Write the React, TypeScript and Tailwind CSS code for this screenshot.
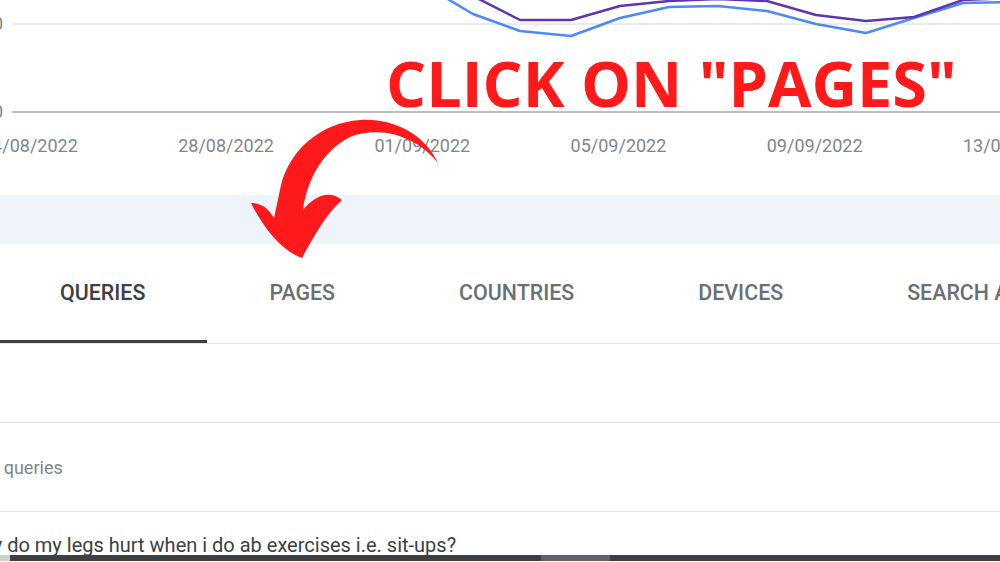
import React from 'react'

const dates = ['24/08/2022', '28/08/2022', '01/09/2022', '05/09/2022', '09/09/2022', '13/09/2022']
const tabs = ['Queries', 'Pages', 'Countries', 'Devices', 'Search appearance']

const blue: [number, number][] = [
  [424, -15], [473, 14], [520, 31], [571, 36], [620, 18], [669, 7], [718, 6],
  [767, 11], [816, 24], [866, 33], [914, 18], [963, 3], [1012, 2],
]
const purple: [number, number][] = [
  [424, -30], [473, -4], [520, 20], [571, 20], [620, 6], [669, 1], [718, -1],
  [767, 1], [816, 15], [866, 21], [914, 17], [963, 0], [1012, -2],
]

const toPoints = (pts: [number, number][]) => pts.map(([x, y]) => `${x},${y}`).join(' ')

function Chart() {
  return (
    <div className="relative h-[124px]">
      <svg className="absolute inset-0" width="1000" height="124" viewBox="0 0 1000 124">
        <line x1="12" y1="24" x2="1000" y2="24" stroke="#e4e4e4" strokeWidth="1.5" />
        <line x1="12" y1="112" x2="1000" y2="112" stroke="#a8a8a8" strokeWidth="1.5" />
        <polyline points={toPoints(blue)} fill="none" stroke="#4b8af5" strokeWidth="2.5" strokeLinejoin="round" />
        <polyline points={toPoints(purple)} fill="none" stroke="#5e35b1" strokeWidth="2.5" strokeLinejoin="round" />
      </svg>
      {/* y axis labels, mostly cut off on the left */}
      <span className="absolute left-[-7px] top-[13px] text-[18px] leading-[21px] text-[#80868b]">0</span>
      <span className="absolute left-[-7px] top-[101px] text-[18px] leading-[21px] text-[#80868b]">0</span>
    </div>
  )
}

function Arrow() {
  return (
    <svg
      className="absolute left-[240px] top-[110px] pointer-events-none"
      width="220"
      height="160"
      viewBox="240 110 220 160"
    >
      <path
        d="M438,163 C425,135 395,118 360,120 C320,123 290,150 281,185 L274,218 C268,208 262,203 251,203 C262,225 280,250 302,258 C312,240 325,215 342,200 C330,190 315,195 303,210 C306,185 320,152 350,137 C385,124 420,140 438,163 Z"
        fill="#fe1a1a"
      />
    </svg>
  )
}

export default function App() {
  return (
    <div className="relative w-[1000px] h-[562px] overflow-hidden bg-white font-['Roboto',sans-serif]">
      <Chart />

      {/* Date axis */}
      <div className="flex h-[42px] items-center ml-[-18px] text-[18px] leading-[21px] text-[#80868b] whitespace-nowrap">
        {dates.map((d) => (
          <div key={d} className="w-[196.2px] shrink-0">{d}</div>
        ))}
      </div>

      <div className="h-[29px]" />
      <div className="h-[49px] bg-[#eff3fa]" />

      {/* Tabs */}
      <div className="flex h-[100px] ml-[-2px] border-b border-[#e3e3e3] whitespace-nowrap">
        {tabs.map((t, i) => (
          <div
            key={t}
            className={`relative flex items-center px-[62px] text-[21.4px] font-medium uppercase ${
              i === 0 ? 'text-[#3c4043]' : 'text-[#6b6f74]'
            }`}
          >
            {t}
            {i === 0 && <span className="absolute left-0 right-0 bottom-0 h-[3px] bg-[#3c4043]" />}
          </div>
        ))}
      </div>

      <div className="h-[79px] border-b border-[#e3e3e3]" />

      <div className="flex h-[89px] items-center border-b border-[#e3e3e3] ml-[-31px] text-[18px] text-[#80868b]">
        Top queries
      </div>

      <div className="h-[43px] pt-[23px] ml-[-36px] text-[20px] leading-none text-[#3c4043] whitespace-nowrap">
        Why do my legs hurt when i do ab exercises i.e. sit-ups?
      </div>

      {/* Horizontal scrollbar */}
      <div className="flex h-[6px]">
        <div className="w-[10px] bg-[#cfcfcf]" />
        <div className="w-[531px] bg-[#3d4043]" />
        <div className="w-[69px] bg-[#5f6265]" />
        <div className="flex-1 bg-[#3d4043]" />
      </div>

      {/* Annotation overlays */}
      <div className="absolute left-[386px] top-[51px] font-['Open_Sans',sans-serif] text-[63px] font-bold leading-none text-[#fe1a1a] whitespace-nowrap">
        CLICK ON "PAGES"
      </div>
      <Arrow />
    </div>
  )
}
